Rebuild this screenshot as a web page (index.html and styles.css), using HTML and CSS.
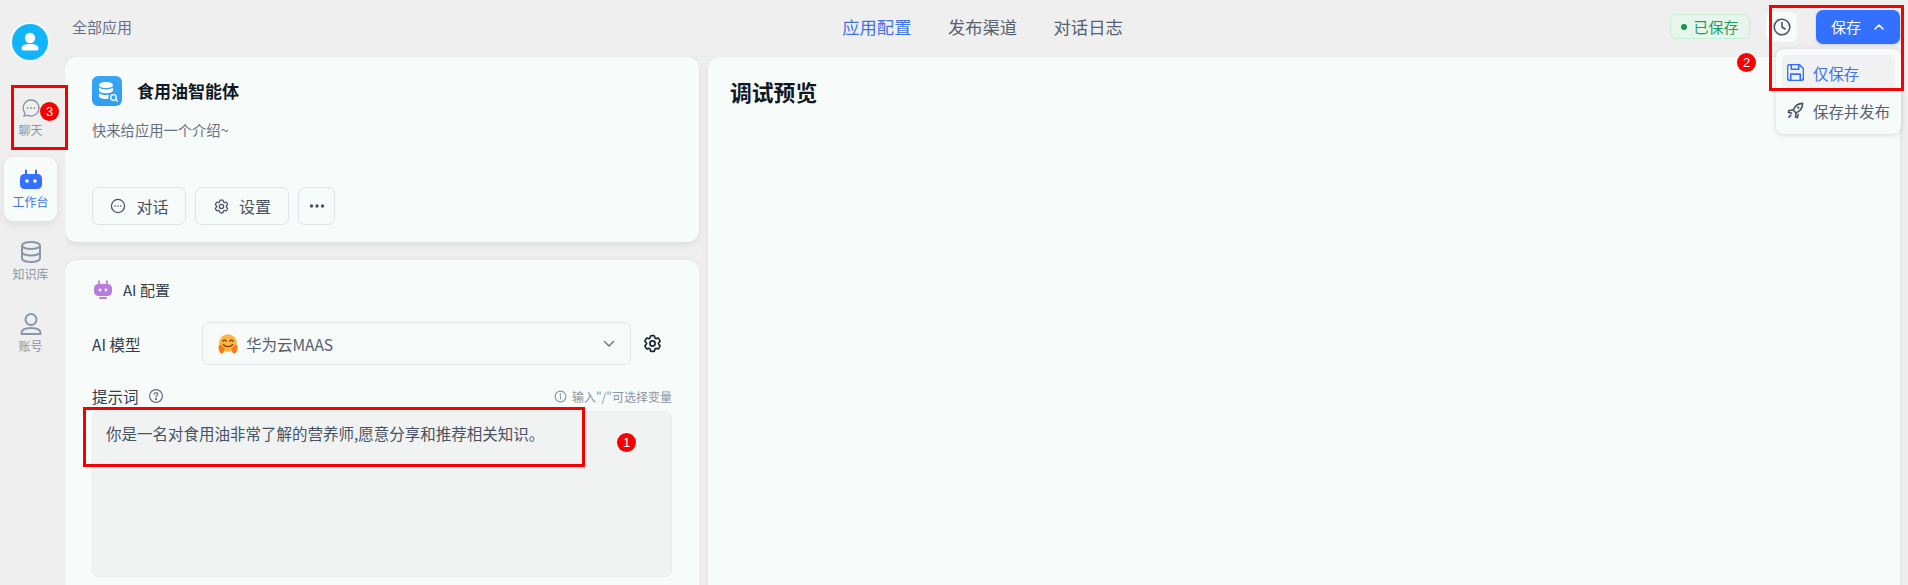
FILE: index.html
```html
<!DOCTYPE html>
<html lang="zh">
<head>
<meta charset="utf-8">
<title>食用油智能体</title>
<link rel="stylesheet" href="styles.css">
</head>
<body>
<div class="app">
  <aside class="sidebar">
    <div class="avatar">
      <svg viewBox="0 0 36 36" width="36" height="36"><circle cx="18" cy="18" r="18" fill="#10b5fb"/><circle cx="18" cy="14" r="5.200" fill="#fff"/><path d="M9.500 24.500c0-3.200 3.500-4.600 8.500-4.600s8.500 1.400 8.500 4.600c0 1.400-1 2-2.500 2h-12c-1.500 0-2.500-.6-2.500-2z" fill="#fff"/></svg>
    </div>
    <nav class="nav">
      <div class="nav-item chat">
        <svg viewBox="0 0 20 20" width="20" height="20" fill="none" stroke="#8a95a5" stroke-width="1.300"><path d="M10 2a8 8 0 1 1-3.600 15.150L3 18l.9-3.100A8 8 0 0 1 10 2z"/><circle cx="6.600" cy="10" r=".9" fill="#8a95a5" stroke="none"/><circle cx="10" cy="10" r=".9" fill="#8a95a5" stroke="none"/><circle cx="13.400" cy="10" r=".9" fill="#8a95a5" stroke="none"/></svg>
        <span>聊天</span>
      </div>
      <div class="nav-item active">
        <svg viewBox="0 0 24 24" width="24" height="24"><path d="M7 2.500v4M17 2.500v4" stroke="#3370ff" stroke-width="2" stroke-linecap="round"/><rect x="1" y="6" width="22" height="15" rx="4.500" fill="#3370ff"/><circle cx="8" cy="13" r="1.800" fill="#fff"/><circle cx="16" cy="13" r="1.800" fill="#fff"/></svg>
        <span>工作台</span>
      </div>
      <div class="nav-item">
        <svg viewBox="0 0 24 24" width="24" height="24" fill="none" stroke="#8a97a8" stroke-width="2"><ellipse cx="12" cy="5.500" rx="9" ry="3.500"/><path d="M3 5.500v13c0 1.900 4 3.500 9 3.500s9-1.600 9-3.500v-13M3 12c0 1.900 4 3.500 9 3.500s9-1.600 9-3.500"/></svg>
        <span>知识库</span>
      </div>
      <div class="nav-item">
        <svg viewBox="0 0 24 24" width="24" height="24" fill="none" stroke="#8a97a8" stroke-width="2"><circle cx="12" cy="7.500" r="5.500"/><path d="M2.500 22v-1c0-3 3-5 9.500-5s9.500 2 9.500 5v1z" stroke-linejoin="round"/></svg>
        <span>账号</span>
      </div>
    </nav>
  </aside>

  <div class="main">
    <header class="topbar">
      <div class="crumb">全部应用</div>
      <div class="tabs">
        <span class="tab current">应用配置</span>
        <span class="tab">发布渠道</span>
        <span class="tab">对话日志</span>
      </div>
      <div class="actions">
        <div class="saved"><i class="dot"></i>已保存</div>
        <button class="clock">
          <svg viewBox="0 0 20 20" width="20" height="20" fill="none" stroke="#485264" stroke-width="1.600" stroke-linecap="round" stroke-linejoin="round"><circle cx="10" cy="10" r="7.800"/><path d="M10 5.500V10l3 2"/></svg>
        </button>
        <button class="save">保存
          <svg viewBox="0 0 12 12" width="12" height="12" fill="none" stroke="#fff" stroke-width="1.500" stroke-linecap="round" stroke-linejoin="round"><path d="M2 8l4-4 4 4"/></svg>
        </button>
      </div>
    </header>

    <div class="content">
      <div class="left">
        <section class="card info">
          <div class="app-head">
            <div class="app-icon">
              <svg viewBox="0 0 30 30" width="30" height="30"><defs><linearGradient id="g" x1="0" y1="0" x2="0" y2="1"><stop offset="0" stop-color="#35a7f3"/><stop offset="1" stop-color="#2f9df5"/></linearGradient></defs><rect width="30" height="30" rx="6" fill="url(#g)"/><path d="M7 9c0-1.900 3-3 7-3s7 1.100 7 3-3 3-7 3-7-1.100-7-3zM7 11.600c1.400 1.200 4 1.900 7 1.900s5.600-.7 7-1.900v2.900c0 1.500-3 2.800-7 2.800s-7-1.300-7-2.800zM7 17.200c1.400 1.200 4 1.800 7 1.800 1 0 2-.1 3-.2-.6 1-.8 2.300-.4 4-.8.100-1.700.2-2.600.2-4 0-7-1.300-7-2.800z" fill="#fff"/><circle cx="21.500" cy="21.500" r="2.800" fill="none" stroke="#fff" stroke-width="1.300"/><path d="M23.600 23.600l1.700 1.700" stroke="#fff" stroke-width="1.300" stroke-linecap="round"/></svg>
            </div>
            <h1 class="app-name">食用油智能体</h1>
          </div>
          <p class="app-desc">快来给应用一个介绍~</p>
          <div class="btn-row">
            <button class="btn wide">
              <svg viewBox="0 0 20 20" width="18" height="18" fill="none" stroke="#485264" stroke-width="1.400"><circle cx="10" cy="10" r="7.300"/><circle cx="6.800" cy="10" r=".9" fill="#485264" stroke="none"/><circle cx="10" cy="10" r=".9" fill="#485264" stroke="none"/><circle cx="13.200" cy="10" r=".9" fill="#485264" stroke="none"/></svg>
              对话
            </button>
            <button class="btn wide">
              <svg viewBox="0 0 24 24" width="17" height="17" fill="none" stroke="#485264" stroke-width="1.800" stroke-linejoin="round"><path d="M9.594 3.940c.09-.542.56-.94 1.110-.94h2.593c.55 0 1.020.398 1.110.94l.213 1.281c.063.374.313.686.645.870.074.040.147.083.22.127.324.196.72.257 1.075.124l1.217-.456a1.125 1.125 0 011.370.49l1.296 2.247a1.125 1.125 0 01-.26 1.431l-1.003.827c-.293.24-.438.613-.431.992a6.759 6.759 0 010 .255c-.007.378.138.75.43.99l1.005.828c.424.35.534.954.26 1.430l-1.298 2.247a1.125 1.125 0 01-1.369.491l-1.217-.456c-.355-.133-.75-.072-1.076.124a6.570 6.570 0 01-.22.128c-.331.183-.581.495-.644.869l-.213 1.280c-.09.543-.56.941-1.110.941h-2.594c-.55 0-1.020-.398-1.110-.94l-.213-1.281c-.062-.374-.312-.686-.644-.87a6.520 6.520 0 01-.22-.127c-.325-.196-.72-.257-1.076-.124l-1.217.456a1.125 1.125 0 01-1.369-.49l-1.297-2.247a1.125 1.125 0 01.26-1.431l1.004-.827c.292-.24.437-.613.43-.992a6.932 6.932 0 010-.255c.007-.378-.138-.75-.43-.99l-1.004-.828a1.125 1.125 0 01-.26-1.430l1.297-2.247a1.125 1.125 0 011.370-.491l1.216.456c.356.133.751.072 1.076-.124.072-.044.146-.087.22-.128.332-.183.582-.495.644-.869l.214-1.281z"/><circle cx="12" cy="12" r="3"/></svg>
              设置
            </button>
            <button class="btn more">
              <svg viewBox="0 0 16 6" width="16" height="6" fill="#485264"><circle cx="2.500" cy="3" r="1.700"/><circle cx="8" cy="3" r="1.700"/><circle cx="13.500" cy="3" r="1.700"/></svg>
            </button>
          </div>
        </section>

        <section class="card config">
          <div class="config-title">
            <svg viewBox="0 0 20 20" width="20" height="20"><path d="M6 1v4M14 1v4" stroke="#b87be0" stroke-width="1.700" stroke-linecap="round"/><rect x="1" y="4" width="18" height="12" rx="4.500" fill="#b87be0"/><rect x="6" y="17" width="8" height="2" rx="1" fill="#b87be0"/><circle cx="7" cy="10" r="1.400" fill="#fff"/><circle cx="13" cy="10" r="1.400" fill="#fff"/></svg>
            <span>AI 配置</span>
          </div>
          <div class="model-row">
            <label class="model-label">AI 模型</label>
            <div class="select">
              <svg class="hug" viewBox="0 0 20 20" width="20" height="20"><circle cx="10" cy="9" r="8.800" fill="#ffb53d"/><path d="M4.800 7.200c.8-1.400 2.600-1.400 3.400 0M11.800 7.200c.8-1.400 2.600-1.400 3.400 0" stroke="#6b3a13" stroke-width="1.200" fill="none" stroke-linecap="round"/><path d="M5.500 10.500c1.200 2.800 7.800 2.800 9 0" stroke="#7a3d14" stroke-width="1.300" fill="none" stroke-linecap="round"/><path d="M.5 12.500c0-1.800 1.800-2.300 3-1.300l2.700 3c.8 1.800-.6 5.300-2.700 5.300-2 0-3-4-3-7zM19.500 12.500c0-1.800-1.800-2.300-3-1.300l-2.700 3c-.8 1.800.6 5.300 2.700 5.300 2 0 3-4 3-7z" fill="#fa7a1a"/></svg>
              <span class="select-text">华为云MAAS</span>
              <svg class="chev" viewBox="0 0 12 8" width="12" height="8" fill="none" stroke="#667085" stroke-width="1.400" stroke-linecap="round" stroke-linejoin="round"><path d="M1.500 1.500L6 6l4.500-4.500"/></svg>
            </div>
            <svg class="gear" viewBox="0 0 24 24" width="21" height="21" fill="none" stroke="#1d2532" stroke-width="1.900" stroke-linejoin="round"><path d="M9.594 3.940c.09-.542.56-.94 1.110-.94h2.593c.55 0 1.020.398 1.110.94l.213 1.281c.063.374.313.686.645.870.074.040.147.083.22.127.324.196.72.257 1.075.124l1.217-.456a1.125 1.125 0 011.370.49l1.296 2.247a1.125 1.125 0 01-.26 1.431l-1.003.827c-.293.24-.438.613-.431.992a6.759 6.759 0 010 .255c-.007.378.138.75.43.99l1.005.828c.424.35.534.954.26 1.430l-1.298 2.247a1.125 1.125 0 01-1.369.491l-1.217-.456c-.355-.133-.75-.072-1.076.124a6.570 6.570 0 01-.22.128c-.331.183-.581.495-.644.869l-.213 1.280c-.09.543-.56.941-1.110.941h-2.594c-.55 0-1.020-.398-1.110-.94l-.213-1.281c-.062-.374-.312-.686-.644-.87a6.520 6.520 0 01-.22-.127c-.325-.196-.72-.257-1.076-.124l-1.217.456a1.125 1.125 0 01-1.369-.49l-1.297-2.247a1.125 1.125 0 01.26-1.431l1.004-.827c.292-.24.437-.613.43-.992a6.932 6.932 0 010-.255c.007-.378-.138-.75-.43-.99l-1.004-.828a1.125 1.125 0 01-.26-1.430l1.297-2.247a1.125 1.125 0 011.370-.491l1.216.456c.356.133.751.072 1.076-.124.072-.044.146-.087.22-.128.332-.183.582-.495.644-.869l.214-1.281z"/><circle cx="12" cy="12" r="3"/></svg>
          </div>
          <div class="prompt-head">
            <span class="prompt-label">提示词</span>
            <svg viewBox="0 0 16 16" width="16" height="16" fill="none" stroke="#667085" stroke-width="1.200" stroke-linecap="round"><circle cx="8" cy="8" r="6.400"/><path d="M6.300 6.300c0-2.200 3.500-2.200 3.500 0 0 1.200-1.800 1.300-1.800 2.700"/><circle cx="8" cy="11.200" r=".5" fill="#667085"/></svg>
            <span class="hint">
              <svg viewBox="0 0 14 14" width="13" height="13" fill="none" stroke="#8a95a5" stroke-width="1.200" stroke-linecap="round"><circle cx="7" cy="7" r="5.800"/><path d="M7 6.500v3"/><circle cx="7" cy="4.400" r=".4"/></svg>
              输入"/"可选择变量
            </span>
          </div>
          <div class="prompt">你是一名对食用油非常了解的营养师,愿意分享和推荐相关知识。</div>
        </section>
      </div>
      <section class="card preview">
        <h2 class="preview-title">调试预览</h2>
      </section>
    </div>
  </div>
</div>

<div class="dropdown">
  <div class="dd-item selected">
    <svg viewBox="2 2 16 16" width="17" height="17" fill="none" stroke="#3370ff" stroke-width="1.500" stroke-linejoin="round"><path d="M2.500 5a2.500 2.500 0 0 1 2.500-2.500h8.500l4 4V15a2.500 2.500 0 0 1-2.500 2.500H5A2.500 2.500 0 0 1 2.500 15z"/><path d="M6 2.500V7h7V2.500M5.500 17.500V11.500h9v6"/></svg>
    仅保存
  </div>
  <div class="dd-item">
    <svg viewBox="1 1 18 18" width="17" height="17" fill="none" stroke="#485264" stroke-width="1.700" stroke-linejoin="round"><path d="M17.500 2.500c-4.500 0-8 2.500-10 7l3 3c4.500-2 7-5.500 7-10z"/><path d="M7.500 9.500L3 10l-.5 2 4 1M10.500 12.500L10 17l2 .5 1-4M5.500 14.500L2.500 17.500"/><circle cx="13" cy="7" r="1.200" fill="#485264" stroke="none"/></svg>
    保存并发布
  </div>
</div>

<div class="mark box-chat"></div>
<div class="mark box-save"></div>
<div class="mark box-prompt"></div>
<div class="num num-1">1</div>
<div class="num num-2">2</div>
<div class="num num-3">3</div>
</body>
</html>
```

FILE: styles.css
```css
* { box-sizing: border-box; }
html, body { margin: 0; height: 585px; overflow: hidden; }
body {
  position: relative;
  background: #efeff0;
  font-family: "Noto Sans CJK SC", "Noto Sans", sans-serif;
  color: #1d2532;
}
button { font-family: inherit; cursor: pointer; }

.app { display: flex; height: 585px; }

.sidebar { width: 65px; flex: none; display: flex; flex-direction: column; align-items: center; padding-top: 22px; }
.avatar { width: 40px; height: 40px; border-radius: 50%; background: #f7fafa; padding: 2px; margin-left: -5px; }
.avatar svg { display: block; }
.nav { display: flex; flex-direction: column; gap: 8px; margin-top: 23px; width: 100%; padding-left: 4px; }
.nav-item { width: 53px; height: 64px; display: flex; flex-direction: column; align-items: center; justify-content: center; gap: 2px; font-size: 12px; line-height: 16px; color: #8a95a5; }
.nav-item.active { background: #f7fbf9; color: #3f74e8; border-radius: 9px; box-shadow: 0 3px 8px rgba(30,40,60,.09); }
.nav-item.chat { height: 63px; margin-top: 1px; }
.nav-item.chat span { margin-top: 2px; }

.main { flex: 1; min-width: 0; display: flex; flex-direction: column; }
.topbar { height: 57px; flex: none; display: grid; grid-template-columns: 1fr auto 1fr; align-items: center; padding: 0 8px 3px 7px; border-bottom: 1px solid #e9ecec; }
.crumb { font-size: 15px; color: #667085; }
.tabs { display: flex; gap: 36.500px; font-size: 17.300px; color: #556070; margin-right: 7px; }
.tab.current { color: #3f74e8; }
.actions { display: flex; justify-content: flex-end; align-items: center; }
.saved { width: 80px; height: 25px; display: flex; align-items: center; justify-content: center; gap: 6px; font-size: 15px; color: #1e9e5c; background: #e6f6ec; border: 1px solid #c7eed6; border-radius: 6px; margin-right: 15px; }
.dot { width: 6px; height: 6px; border-radius: 50%; background: #0e9a55; }
.clock { width: 33px; height: 32px; padding: 0; display: flex; align-items: center; justify-content: center; background: #f7fbf9; border: 1px solid #eceff0; border-radius: 7px; margin-right: 18px; }
.save { width: 84px; height: 34px; display: flex; align-items: center; justify-content: center; gap: 12px; padding: 0; background: #3370ff; border: 0; border-radius: 7px; color: #fff; font-size: 15px; box-shadow: 0 1px 3px rgba(40,80,200,.2); }

.content { flex: 1; min-height: 0; display: flex; gap: 9px; padding-right: 8px; overflow: hidden; }
.left { width: 634px; flex: none; display: flex; flex-direction: column; gap: 18px; }
.card { background: #f7fbf9; border-radius: 12px; box-shadow: 0 2px 6px rgba(40,60,70,.10); }
.info { height: 185px; padding: 19px 27px; flex: none; }
.app-head { display: flex; align-items: center; gap: 15px; }
.app-icon { width: 30px; height: 30px; }
.app-icon svg { display: block; }
.app-name { margin: 0; font-size: 17px; font-weight: 700; line-height: 30px; color: #111824; }
.app-desc { margin: 12px 0 0; font-size: 14.300px; line-height: 24px; color: #667085; }
.btn-row { display: flex; gap: 9px; margin-top: 45px; }
.btn { height: 38px; display: flex; align-items: center; justify-content: center; gap: 9px; padding: 0; background: #f7fbf9; border: 1px solid #dfe3e6; border-radius: 7px; font-size: 16px; color: #485264; }
.btn.wide { width: 94px; }
.btn.more { width: 37px; }

.config { flex: 1; min-height: 0; padding: 20px 27px 0; border-radius: 12px 12px 0 0; box-shadow: 0 -1px 4px rgba(40,60,70,.05); }
.config-title { display: flex; align-items: center; gap: 10px; font-size: 15px; line-height: 20px; color: #333c4b; margin-left: 1px; }
.model-row { display: flex; align-items: center; margin-top: 22px; }
.model-label { width: 110px; font-size: 15.500px; color: #333c4b; }
.select { width: 429px; height: 43px; flex: none; display: flex; align-items: center; padding: 0 15px; border: 1px solid #e2e6e8; border-radius: 7px; }
.select-text { font-size: 15.500px; color: #556070; margin-left: 8px; flex: 1; }
.gear { margin-left: 11px; }
.prompt-head { display: flex; align-items: center; margin-top: 20px; height: 22px; gap: 9px; }
.prompt-label { font-size: 15.500px; color: #333c4b; }
.hint { margin-left: auto; display: flex; align-items: center; gap: 5px; font-size: 12px; color: #8a95a5; }
.prompt { width: 580px; height: 166px; margin-top: 4px; padding: 9px 13px; background: #f0f3f1; border: 1px solid #e7ebea; border-radius: 7px; font-size: 15.500px; line-height: 24px; color: #485264; }

.preview { flex: 1; min-width: 0; padding: 20px 22px; border-radius: 12px 12px 0 0; }
.preview-title { margin: 0; font-size: 21.800px; font-weight: 700; line-height: 30px; color: #111824; }

.dropdown { position: absolute; left: 1776px; top: 49px; width: 125px; height: 85px; padding: 6px; background: #f7fbf9; border-radius: 8px; box-shadow: 0 1px 5px rgba(30,40,60,.16); display: flex; flex-direction: column; gap: 3px; }
.dd-item { height: 35px; display: flex; align-items: center; gap: 9px; padding-left: 5px; font-size: 15.400px; color: #556070; border-radius: 5px; white-space: nowrap; }
.dd-item.selected { background: #f0f1f2; color: #3f74e8; }

.mark { position: absolute; border: 3px solid #f60000; }
.box-chat { left: 11px; top: 85px; width: 57px; height: 65px; }
.box-save { left: 1769px; top: 5px; width: 135px; height: 86px; }
.box-prompt { left: 83px; top: 407px; width: 502px; height: 60px; }
.num { position: absolute; width: 19px; height: 19px; border-radius: 50%; background: #f60000; color: #fff; font: 13px/19px "Liberation Sans", sans-serif; text-align: center; }
.num-1 { left: 617px; top: 433px; }
.num-2 { left: 1737px; top: 53px; }
.num-3 { left: 40px; top: 102px; }
```
